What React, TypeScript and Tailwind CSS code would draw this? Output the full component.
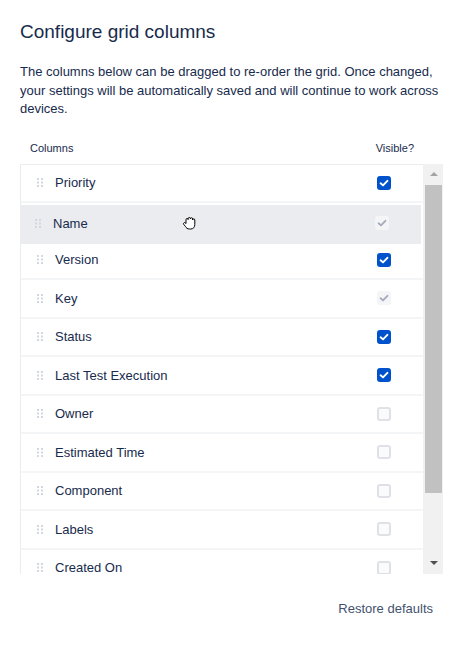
import React from "react";

type Col = { name: string; state: "on" | "off" | "locked" };

const columns: Col[] = [
  { name: "Priority", state: "on" },
  { name: "Name", state: "locked" },
  { name: "Version", state: "on" },
  { name: "Key", state: "locked" },
  { name: "Status", state: "on" },
  { name: "Last Test Execution", state: "on" },
  { name: "Owner", state: "off" },
  { name: "Estimated Time", state: "off" },
  { name: "Component", state: "off" },
  { name: "Labels", state: "off" },
  { name: "Created On", state: "off" },
];

const DragHandle = () => (
  <svg width="6" height="9" viewBox="0 0 6 9" className="shrink-0">
    {[0, 3.5, 7].map((y) =>
      [0, 4].map((x) => (
        <rect key={`${x}-${y}`} x={x} y={y} width="2" height="2" fill="#d3d7de" />
      ))
    )}
  </svg>
);

const Check = ({ color }: { color: string }) => (
  <svg width="14" height="14" viewBox="0 0 14 14">
    <path d="M3.6 7.3 L6 9.4 L10.4 4.8" fill="none" stroke={color} strokeWidth="1.9" strokeLinecap="round" strokeLinejoin="round" />
  </svg>
);

const Checkbox = ({ state }: { state: Col["state"] }) => {
  if (state === "on")
    return (
      <div className="w-[14px] h-[14px] rounded-[3px] bg-[#0052cc] flex items-center justify-center">
        <Check color="#ffffff" />
      </div>
    );
  if (state === "locked")
    return (
      <div className="w-[14px] h-[14px] rounded-[3px] bg-[#f4f5f7] flex items-center justify-center">
        <Check color="#a5adba" />
      </div>
    );
  return <div className="w-[14px] h-[14px] rounded-[3px] border-2 border-[#dfe1e6] bg-[#fafbfc]" />;
};

const GrabCursor = () => (
  <svg width="15" height="16" viewBox="0 0 15 16" className="absolute left-[163px] top-[10px]">
    <path
      d="M4 7 V4.6 a1.1 1.1 0 0 1 2.2 0 V3.6 a1.1 1.1 0 0 1 2.2 0 V3.9 a1.1 1.1 0 0 1 2.2 0 V5 a1.1 1.1 0 0 1 2.2 0 V9.5 c0 2.8 -1.6 4.5 -4.2 4.5 h-1.2 c-2 0 -3.1 -1 -4 -2.6 L1.6 9.2 a1.1 1.1 0 0 1 1.6 -1.4 L4 8.6 Z"
      fill="#ffffff"
      stroke="#000000"
      strokeWidth="1"
      strokeLinejoin="round"
    />
  </svg>
);

const Row = ({ col, dragging }: { col: Col; dragging?: boolean }) => (
  <div
    className={
      dragging
        ? "relative -left-[2px] top-[2px] h-[38.5px] shrink-0 flex items-center bg-[#ebecf0] border-b-2 border-transparent"
        : "relative h-[38.5px] shrink-0 flex items-center border-b-2 border-[#f4f5f7]"
    }
  >
    <div className="ml-4 mr-3">
      <DragHandle />
    </div>
    <span className="text-[13px] leading-[16px] pt-[1px] text-[#172b4d]">{col.name}</span>
    <div className="ml-auto mr-[32px]">
      <Checkbox state={col.state} />
    </div>
    {dragging && <GrabCursor />}
  </div>
);

const Scrollbar = () => (
  <div className="w-[20px] shrink-0 bg-[#f1f1f1] flex flex-col">
    <div className="h-[21px] flex items-center justify-center pl-[2px]">
      <div className="w-0 h-0 border-l-[4px] border-r-[4px] border-b-[4px] border-l-transparent border-r-transparent border-b-[#a3a3a3]" />
    </div>
    <div className="h-[308px] ml-[2px] mr-[1px] bg-[#c1c1c1]" />
    <div className="flex-1 flex items-end justify-center pb-[9px] pl-[2px]">
      <div className="w-0 h-0 border-l-[4px] border-r-[4px] border-t-[4px] border-l-transparent border-r-transparent border-t-[#505050]" />
    </div>
  </div>
);

export default function App() {
  return (
    <div className="w-[462px] h-[645px] bg-white px-5 pt-5 font-['Liberation_Sans',Arial,sans-serif]">
      <h1 className="text-[19px] leading-[24px] text-[#172b4d] font-medium">Configure grid columns</h1>
      <p className="mt-[19px] text-[13px] leading-[18.5px] text-[#172b4d] whitespace-nowrap">
        The columns below can be dragged to re-order the grid. Once changed,
        <br />
        your settings will be automatically saved and will continue to work across
        <br />
        devices.
      </p>

      <div className="mt-[22px] w-[423px] flex items-center h-[16px] text-[11px] text-[#172b4d]">
        <span className="pl-[10px]">Columns</span>
        <span className="ml-auto pr-[29px]">Visible?</span>
      </div>

      <div className="mt-[7px] w-[423px] h-[410px] flex">
        <div className="flex-1 border-t border-l border-[#ebecf0] overflow-hidden flex flex-col">
          {columns.map((c) => (
            <Row key={c.name} col={c} dragging={c.name === "Name"} />
          ))}
        </div>
        <Scrollbar />
      </div>

      <div className="mt-[27px] w-[413px] flex justify-end">
        <button className="text-[13px] leading-[16px] text-[#42526e]">Restore defaults</button>
      </div>
    </div>
  );
}
